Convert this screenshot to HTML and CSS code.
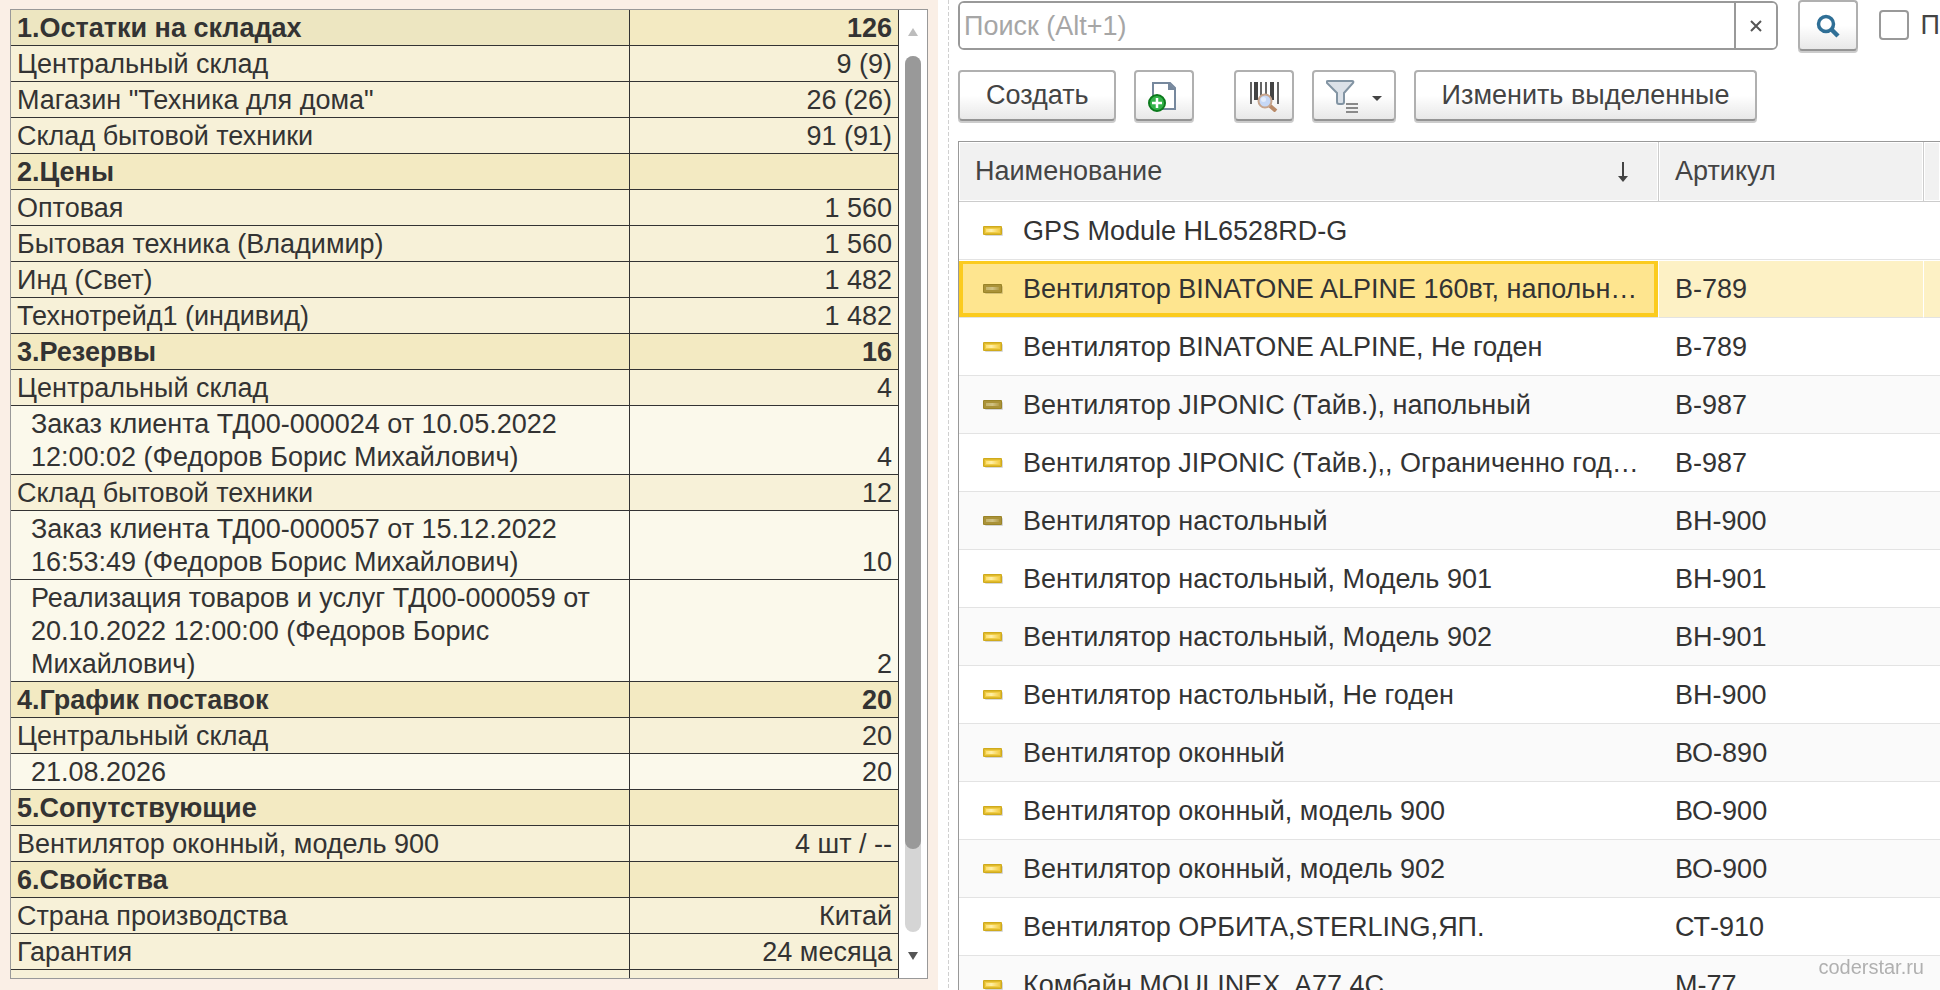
FILE: index.html
```html
<!DOCTYPE html>
<html lang="ru">
<head>
    <meta charset="UTF-8">
    <meta name="viewport" content="width=device-width, initial-scale=1.0">
    <title>Номенклатура</title>
    <link rel="stylesheet" href="styles.css">
</head>
<body>
    <!-- shared list icons -->
    <svg class="defs" width="0" height="0" aria-hidden="true">
        <defs>
            <linearGradient id="gold" x1="0" y1="0" x2="1" y2="0">
                <stop offset="0" stop-color="#ffe070"/>
                <stop offset="0.4" stop-color="#fff0a8"/>
                <stop offset="1" stop-color="#f5cf4c"/>
            </linearGradient>
            <linearGradient id="dark" x1="0" y1="0" x2="1" y2="0">
                <stop offset="0" stop-color="#c4b36a"/>
                <stop offset="0.5" stop-color="#d0c184"/>
                <stop offset="1" stop-color="#b39c48"/>
            </linearGradient>
            <symbol id="item" viewBox="0 0 20 10">
                <rect x="2" y="2" width="18" height="8" rx="1" fill="#000" opacity="0.15"/>
                <rect x="0" y="0" width="19" height="9" rx="1" fill="#cfaa1c"/>
                <rect x="1" y="1" width="17" height="7" fill="#e0ba2c"/>
                <rect x="2" y="2" width="15" height="5" fill="#f0cd48"/>
                <rect x="3" y="3" width="13" height="3" fill="url(#gold)"/>
            </symbol>
            <symbol id="item-dark" viewBox="0 0 20 10">
                <rect x="2" y="2" width="18" height="8" rx="1" fill="#000" opacity="0.15"/>
                <rect x="0" y="0" width="19" height="9" rx="1" fill="#9a8428"/>
                <rect x="1" y="1" width="17" height="7" fill="#aa9238"/>
                <rect x="3" y="3" width="13" height="3" fill="url(#dark)"/>
            </symbol>
        </defs>
    </svg>

    <div class="page">
        <aside class="info">
            <div class="info-box">
                <table class="info-table">
                    <colgroup>
                        <col>
                        <col class="col-value">
                    </colgroup>
                    <tbody>
                        <tr class="group current"><td>1.Остатки на складах</td><td>126</td></tr>
                        <tr><td>Центральный склад</td><td>9 (9)</td></tr>
                        <tr><td>Магазин "Техника для дома"</td><td>26 (26)</td></tr>
                        <tr><td>Склад бытовой техники</td><td>91 (91)</td></tr>
                        <tr class="group"><td>2.Цены</td><td></td></tr>
                        <tr><td>Оптовая</td><td>1 560</td></tr>
                        <tr><td>Бытовая техника (Владимир)</td><td>1 560</td></tr>
                        <tr><td>Инд (Свет)</td><td>1 482</td></tr>
                        <tr><td>Технотрейд1 (индивид)</td><td>1 482</td></tr>
                        <tr class="group"><td>3.Резервы</td><td>16</td></tr>
                        <tr><td>Центральный склад</td><td>4</td></tr>
                        <tr class="detail"><td>Заказ клиента ТД00-000024 от 10.05.2022 12:00:02 (Федоров Борис Михайлович)</td><td>4</td></tr>
                        <tr><td>Склад бытовой техники</td><td>12</td></tr>
                        <tr class="detail"><td>Заказ клиента ТД00-000057 от 15.12.2022 16:53:49 (Федоров Борис Михайлович)</td><td>10</td></tr>
                        <tr class="detail"><td>Реализация товаров и услуг ТД00-000059 от 20.10.2022 12:00:00 (Федоров Борис Михайлович)</td><td>2</td></tr>
                        <tr class="group"><td>4.График поставок</td><td>20</td></tr>
                        <tr><td>Центральный склад</td><td>20</td></tr>
                        <tr class="detail"><td>21.08.2026</td><td>20</td></tr>
                        <tr class="group"><td>5.Сопутствующие</td><td></td></tr>
                        <tr><td>Вентилятор оконный, модель 900</td><td>4 шт / --</td></tr>
                        <tr class="group"><td>6.Свойства</td><td></td></tr>
                        <tr><td>Страна производства</td><td>Китай</td></tr>
                        <tr><td>Гарантия</td><td>24 месяца</td></tr>
                        <tr><td>&nbsp;</td><td></td></tr>
                    </tbody>
                </table>
                <div class="scrollbar">
                    <svg class="scroll-arrow" viewBox="0 0 10 8"><path d="M5 0L10 8H0z" fill="#bdbdbd"/></svg>
                    <div class="track"><div class="thumb"></div></div>
                    <svg class="scroll-arrow" viewBox="0 0 10 8"><path d="M0 0H10L5 8z" fill="#555"/></svg>
                </div>
            </div>
        </aside>

        <div class="splitter"></div>

        <main class="list">
            <div class="search-row">
                <div class="search-field">
                    <input type="text" class="search-input" placeholder="Поиск (Alt+1)" aria-label="Поиск">
                    <button type="button" class="clear" aria-label="Очистить">
                        <svg width="12" height="12" viewBox="0 0 12 12"><path d="M1 1L11 11M11 1L1 11" stroke="#555" stroke-width="2"/></svg>
                    </button>
                </div>
                <button type="button" class="btn btn-icon" aria-label="Найти">
                    <svg width="24" height="24" viewBox="0 0 24 24" fill="none" stroke="#2f6f96">
                        <circle cx="10" cy="10" r="7.5" stroke-width="3.5"/>
                        <path d="M15 15L22 22" stroke-width="4.5"/>
                    </svg>
                </button>
                <label class="check"><input type="checkbox" class="check-box">П</label>
            </div>

            <div class="toolbar">
                <button type="button" class="btn">Создать</button>
                <button type="button" class="btn btn-icon" aria-label="Создать копированием">
                    <svg width="32" height="32" viewBox="0 0 32 32">
                        <path d="M5 3H22L27 8V29H5z" fill="#fff" stroke="#76889d" stroke-width="2"/>
                        <path d="M20 2L28 10H20z" fill="#76889d"/>
                        <circle cx="9" cy="23" r="8" fill="#34b34a" stroke="#0b7a1c" stroke-width="2"/>
                        <path d="M9 18V28M4 23H14" stroke="#fff" stroke-width="2.5"/>
                    </svg>
                </button>
                <button type="button" class="btn btn-icon barcode" aria-label="Поиск по штрихкоду">
                    <svg width="30" height="32" viewBox="0 0 30 32">
                        <path d="M2 2V24M12 2V20M17 2V20M29 2V24" stroke="#666" stroke-width="2"/>
                        <path d="M7 2V20M23 2V20" stroke="#444" stroke-width="4"/>
                        <path d="M20 25L27 31" stroke="#b98a68" stroke-width="4"/>
                        <circle cx="16" cy="21" r="6.5" fill="#c6d8f6" stroke="#c7a58d" stroke-width="2"/>
                        <circle cx="14.5" cy="19.5" r="2.5" fill="#e4edfc"/>
                    </svg>
                </button>
                <button type="button" class="btn btn-filter" aria-label="Отбор">
                    <svg width="56" height="34" viewBox="0 0 56 34">
                        <path d="M2 2H26Q28 2 27 4L18 14V23Q18 25 16 25H13Q11 25 11 23V14L1 4Q0 2 2 2z" fill="#dbe1e8" stroke="#8294a3" stroke-width="2"/>
                        <path d="M20 25H32M20 29H32M20 33H32" stroke="#8a8a8a" stroke-width="2"/>
                        <path d="M46 17H56L51 22z" fill="#444"/>
                    </svg>
                </button>
                <button type="button" class="btn">Изменить выделенные</button>
            </div>

            <table class="items">
                <colgroup>
                    <col>
                    <col class="col-article">
                    <col class="col-rest">
                </colgroup>
                <thead>
                    <tr>
                        <th>
                            <div class="head">Наименование
                                <svg width="10" height="20" viewBox="0 0 10 20"><path d="M5 0V16" stroke="#444" stroke-width="2"/><path d="M0 14H10L5 20z" fill="#444"/></svg>
                            </div>
                        </th>
                        <th>Артикул</th>
                        <th></th>
                    </tr>
                </thead>
                <tbody>
                    <tr><td><svg class="icon"><use href="#item"/></svg>GPS Module HL6528RD-G</td><td></td><td></td></tr>
                    <tr class="selected"><td><svg class="icon"><use href="#item-dark"/></svg>Вентилятор BINATONE ALPINE 160вт, напольный</td><td>В-789</td><td></td></tr>
                    <tr><td><svg class="icon"><use href="#item"/></svg>Вентилятор BINATONE ALPINE, Не годен</td><td>В-789</td><td></td></tr>
                    <tr><td><svg class="icon"><use href="#item-dark"/></svg>Вентилятор JIPONIC (Тайв.), напольный</td><td>В-987</td><td></td></tr>
                    <tr><td><svg class="icon"><use href="#item"/></svg>Вентилятор JIPONIC (Тайв.),, Ограниченно годен</td><td>В-987</td><td></td></tr>
                    <tr><td><svg class="icon"><use href="#item-dark"/></svg>Вентилятор настольный</td><td>ВН-900</td><td></td></tr>
                    <tr><td><svg class="icon"><use href="#item"/></svg>Вентилятор настольный, Модель 901</td><td>ВН-901</td><td></td></tr>
                    <tr><td><svg class="icon"><use href="#item"/></svg>Вентилятор настольный, Модель 902</td><td>ВН-901</td><td></td></tr>
                    <tr><td><svg class="icon"><use href="#item"/></svg>Вентилятор настольный, Не годен</td><td>ВН-900</td><td></td></tr>
                    <tr><td><svg class="icon"><use href="#item"/></svg>Вентилятор оконный</td><td>ВО-890</td><td></td></tr>
                    <tr><td><svg class="icon"><use href="#item"/></svg>Вентилятор оконный, модель 900</td><td>ВО-900</td><td></td></tr>
                    <tr><td><svg class="icon"><use href="#item"/></svg>Вентилятор оконный, модель 902</td><td>ВО-900</td><td></td></tr>
                    <tr><td><svg class="icon"><use href="#item"/></svg>Вентилятор ОРБИТА,STERLING,ЯП.</td><td>СТ-910</td><td></td></tr>
                    <tr><td><svg class="icon"><use href="#item"/></svg>Комбайн MOULINEX&nbsp; A77 4C</td><td>М-77</td><td></td></tr>
                </tbody>
            </table>
        </main>
    </div>

    <div class="watermark">coderstar.ru</div>
</body>
</html>
```
FILE: styles.css
```css
* { margin: 0; padding: 0; box-sizing: border-box; }

body {
    font-family: "Liberation Sans", Arial, sans-serif;
    font-size: 27px;
    line-height: 33px;
    color: #333;
    background: #fff;
    overflow: hidden;
}

button, input { font: inherit; color: inherit; }
svg { flex: none; }
.defs { position: absolute; }

.page {
    display: grid;
    grid-template-columns: minmax(0, 938fr) 20px minmax(0, 982fr);
    height: 100vh;
}

/* Left info panel */
.info {
    background: #faefe6;
    padding: 9px 10px 11px;
    height: 100vh;
}

.info-box {
    display: flex;
    align-items: flex-start;
    height: 100%;
    border: 1px solid #999;
    background: #fff;
    overflow: hidden;
}

.info-table {
    flex: 1;
    width: 0;
    table-layout: fixed;
    border-collapse: separate;
    border-spacing: 0;
}

.col-value { width: 269px; }

.info-table td {
    padding: 2px 6px 0;
    background: #f7f1d8;
    border-right: 1px solid #333;
    border-bottom: 1px solid #333;
    vertical-align: bottom;
}

.info-table td:last-child { text-align: right; }
.info-table .group td { background: #f3eac2; font-weight: bold; height: 36px; }
.info-table .current td:first-child { background: #ede6c1; }
.info-table .detail td { background: #fbf9eb; }
.info-table .detail td:first-child { padding-left: 20px; }

.scrollbar {
    display: flex;
    flex-direction: column;
    align-items: center;
    align-self: stretch;
    gap: 20px;
    width: 28px;
    padding: 18px 0;
}

.scroll-arrow { width: 10px; height: 8px; }
.track { flex: 1; width: 16px; border-radius: 8px; background: #d5d5d5; }
.thumb { height: 90.5%; border-radius: 8px; background: #999; }

.splitter {
    width: 1px;
    margin-left: 10px;
    background: repeating-linear-gradient(#d0d0d0 0 4px, #fff 4px 6px);
}

/* Right list */
.list { overflow: hidden; }

.search-row {
    display: flex;
    align-items: flex-start;
    height: 70px;
}

.search-field {
    flex: 1;
    display: flex;
    height: 49px;
    margin: 1px 20px 0 0;
    border: 2px solid #999;
    border-radius: 6px;
    overflow: hidden;
}

.search-input {
    flex: 1;
    min-width: 0;
    border: none;
    outline: none;
    padding: 2px 4px 0;
}

.search-input::placeholder { color: #a6a6a6; opacity: 1; }

.clear {
    display: flex;
    align-items: center;
    justify-content: center;
    width: 42px;
    border: none;
    border-left: 2px solid #999;
    background: #fff;
}

.check {
    display: flex;
    align-items: center;
    gap: 12px;
    height: 50px;
    margin-left: 21px;
    color: #444;
}

.check-box {
    appearance: none;
    width: 30px;
    height: 30px;
    border: 2px solid #999;
    border-radius: 4px;
    background: #fff;
}

.btn {
    display: flex;
    align-items: center;
    justify-content: center;
    height: 51px;
    padding: 0 25px 0 26px;
    color: #444;
    background: linear-gradient(#fff 50%, #e8e8e8);
    border: 2px solid #b0b0b0;
    border-bottom-color: #949494;
    border-radius: 4px;
    box-shadow: 0 2px 0 #ccc;
    white-space: nowrap;
}

.btn-icon { width: 60px; padding: 0; }
.btn-filter { width: 84px; padding: 0; }

.toolbar { display: flex; gap: 18px; margin-bottom: 20px; }
.toolbar .barcode { margin-left: 22px; }

.items {
    width: 100%;
    table-layout: fixed;
    border-collapse: separate;
    border-spacing: 0;
    border-top: 1px solid #999;
    border-left: 1px solid #999;
}

.col-article { width: 265px; }
.col-rest { width: 16px; }

.items th {
    height: 60px;
    padding: 0 16px;
    font-weight: normal;
    text-align: left;
    color: #444;
    background: #f1f1f1;
    border-right: 1px solid #ccc;
    border-bottom: 1px solid #ccc;
    box-shadow: inset 0 0 0 1px #fff;
}

.items th:last-child { border-right: none; padding: 0; }

.head {
    display: flex;
    align-items: center;
    justify-content: space-between;
    padding-right: 14px;
}

.items td {
    height: 58px;
    padding: 1px 18px 0 16px;
    border-bottom: 1px solid #e3e3e3;
    white-space: nowrap;
    overflow: hidden;
    text-overflow: ellipsis;
}

.items td:first-child { padding-left: 24px; }
.items td:last-child { padding: 0; }
.items tr:nth-child(even) td { background: #fafafa; }

.icon {
    width: 20px;
    height: 10px;
    margin: 0 20px 2px 0;
    vertical-align: middle;
}

.items tr.selected td {
    background: #fdf1c5;
    border-right: 1px solid #fff;
    box-shadow: inset 0 1px 0 #fff;
}

.items tr.selected td:first-child {
    background: #fee58f;
    box-shadow: inset 0 1px 0 #fff, inset 0 0 0 4px #fbcb1e;
}

.items tr.selected td:last-child { border-right: none; }

.watermark {
    position: fixed;
    right: 16px;
    bottom: 11px;
    font-size: 20px;
    line-height: 24px;
    color: #b0b0b0;
}
```
